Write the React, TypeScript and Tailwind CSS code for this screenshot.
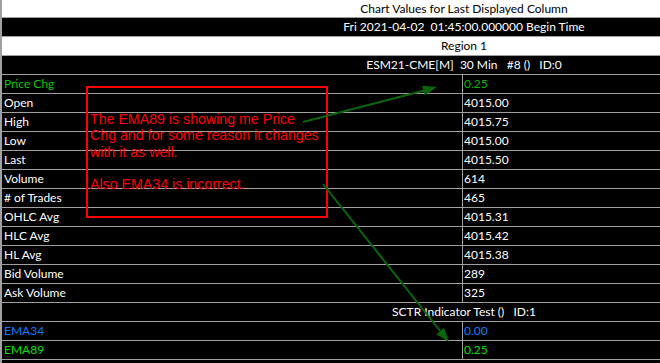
import React from "react";

type Row = { label: string; value: string; lc?: string; vc?: string };

const rows: Row[] = [
  { label: "Price Chg", value: "0.25", lc: "text-[#00c800]", vc: "text-[#00b400]" },
  { label: "Open", value: "4015.00" },
  { label: "High", value: "4015.75" },
  { label: "Low", value: "4015.00" },
  { label: "Last", value: "4015.50" },
  { label: "Volume", value: "614" },
  { label: "# of Trades", value: "465" },
  { label: "OHLC Avg", value: "4015.31" },
  { label: "HLC Avg", value: "4015.42" },
  { label: "HL Avg", value: "4015.38" },
  { label: "Bid Volume", value: "289" },
  { label: "Ask Volume", value: "325" },
];

const rows2: Row[] = [
  { label: "EMA34", value: "0.00", lc: "text-[#0a7cff]", vc: "text-[#0a7cff]" },
  { label: "EMA89", value: "0.25", lc: "text-[#00e000]", vc: "text-[#00e000]" },
];

function Header({ text, white }: { text: string; white?: boolean }) {
  return (
    <div
      className={`h-[19px] border-b border-[#a0a0a0] leading-[18px] text-center pl-[266px] whitespace-pre ${
        white ? "bg-white text-black" : "bg-black text-white"
      }`}
    >
      {text}
    </div>
  );
}

function DataRow({ r }: { r: Row }) {
  return (
    <div className="flex h-[19px] border-b border-[#a0a0a0] leading-[18px] bg-black">
      <div className={`w-[460px] pl-[2px] ${r.lc ?? "text-white"}`}>{r.label}</div>
      <div className={`flex-1 border-l border-[#a0a0a0] pl-[1px] ${r.vc ?? "text-white"}`}>{r.value}</div>
    </div>
  );
}

function arrowHead(x1: number, y1: number, x2: number, y2: number, len = 14, hw = 5) {
  const dx = x2 - x1;
  const dy = y2 - y1;
  const d = Math.hypot(dx, dy);
  const ux = dx / d;
  const uy = dy / d;
  const bx = x2 - ux * len;
  const by = y2 - uy * len;
  const px = -uy * hw;
  const py = ux * hw;
  return `${x2},${y2} ${bx + px},${by + py} ${bx - px},${by - py}`;
}

export default function App() {
  return (
    <div
      className="relative w-[660px] h-[363px] overflow-hidden bg-black text-[12px]"
      style={{ fontFamily: "Lato, 'Noto Sans', sans-serif" }}
    >
      <div className="border-l-2 border-[#a0a0a0] h-full">
        <div className="h-[18px] border-b border-[#a0a0a0] leading-[17px] text-center pl-[266px] bg-white text-black">
          Chart Values for Last Displayed Column
        </div>
        <Header text="Fri 2021-04-02  01:45:00.000000 Begin Time" />
        <Header text="Region 1" white />
        <Header text="ESM21-CME[M]  30 Min   #8 ()   ID:0" />
        {rows.map((r) => (
          <DataRow key={r.label} r={r} />
        ))}
        <Header text="SCTR Indicator Test ()   ID:1" />
        {rows2.map((r) => (
          <DataRow key={r.label} r={r} />
        ))}
      </div>

      <div
        className="absolute left-[86px] top-[86px] w-[242px] h-[132px] border-2 border-[#ff0000] pl-[2px] pt-[23px] text-[#ff0000] text-[14.2px] leading-[16.3px] whitespace-nowrap"
        style={{ fontFamily: "'Liberation Sans', Arial, sans-serif" }}
      >
        <div>The EMA89 is showing me Price</div>
        <div>Chg and for some reason it changes</div>
        <div>with it as well.</div>
        <div className="h-[16.3px]" />
        <div>Also EMA34 is incorrect.</div>
      </div>

      <svg className="absolute left-0 top-0 pointer-events-none" width={660} height={363}>
        <line x1={303} y1={122} x2={428} y2={89.5} stroke="#0b660b" strokeWidth={2} />
        <polygon points={arrowHead(303, 122, 437, 87)} fill="#0b660b" />
        <line x1={323} y1={184} x2={443} y2={334.5} stroke="#0b660b" strokeWidth={2} />
        <polygon points={arrowHead(323, 184, 449, 342)} fill="#0b660b" />
      </svg>
    </div>
  );
}
